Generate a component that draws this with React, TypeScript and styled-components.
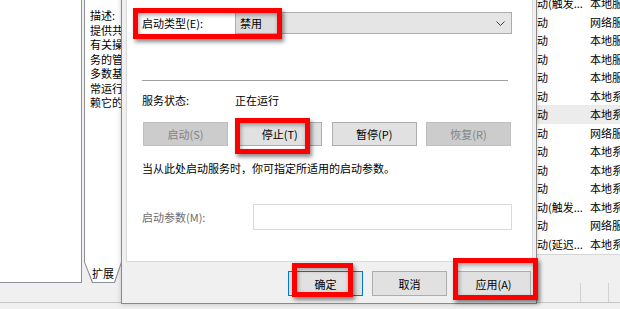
import styled, { createGlobalStyle } from 'styled-components';

const GlobalStyle = createGlobalStyle`
  html, body {
    margin: 0;
    padding: 0;
  }
  body {
    width: 620px;
    height: 309px;
    overflow: hidden;
    background: #f0f0f0;
    font-family: "Noto Sans CJK SC", "Microsoft YaHei", sans-serif;
    font-size: 11px;
    color: #000;
  }
  * {
    box-sizing: border-box;
  }
`;

const descLines = ['描述:', '提供共', '有关操', '务的管', '多数基', '常运行', '赖它的'];

const services = [
  ['手动(触发...', '本地服务'],
  ['自动', '网络服务'],
  ['自动', '本地服务'],
  ['自动', '本地服务'],
  ['自动', '本地服务'],
  ['自动', '本地系统'],
  ['自动', '本地系统'],
  ['自动', '网络服务'],
  ['自动', '本地系统'],
  ['自动', '本地系统'],
  ['自动', '本地系统'],
  ['手动(触发...', '本地系统'],
  ['自动', '网络服务'],
  ['自动(延迟...', '本地系统'],
  ['自动(延迟...', '本地服务'],
];

const App = () => {
  return (
    <Screen>
      <GlobalStyle />
      <MainArea>
        <TreePane />
        <RightPane>
          <Panes>
            <DescPane>
              {descLines.map((line) => (
                <div key={line}>{line}</div>
              ))}
            </DescPane>
            <ListPane>
              <ListBody>
                {services.map(([startup, account], i) => (
                  <ServiceRow key={i} $selected={i === 6}>
                    <span />
                    <Cell>{startup}</Cell>
                    <Cell>{account}</Cell>
                  </ServiceRow>
                ))}
              </ListBody>
            </ListPane>
          </Panes>
          <TabStrip>
            <Tab>扩展</Tab>
          </TabStrip>
        </RightPane>
      </MainArea>
      <StatusBar>
        <StatusCell />
        <StatusCell />
        <StatusCell />
      </StatusBar>

      <Dialog>
        <TabPage>
          <FieldRow>
            <span>启动类型(E):</span>
            <Combo>
              <ComboValue>禁用</ComboValue>
              <svg width='9' height='5' viewBox='0 0 9 5'>
                <polyline points='0.5,0.5 4.5,4.5 8.5,0.5' fill='none' stroke='#404040' strokeWidth='1' />
              </svg>
            </Combo>
          </FieldRow>
          <Separator />
          <StatusRow>
            <span>服务状态:</span>
            <span>正在运行</span>
          </StatusRow>
          <ButtonRow>
            <WinButton disabled>启动(S)</WinButton>
            <WinButton>停止(T)</WinButton>
            <WinButton>暂停(P)</WinButton>
            <WinButton disabled>恢复(R)</WinButton>
          </ButtonRow>
          <HelpText>当从此处启动服务时，你可指定所适用的启动参数。</HelpText>
          <ParamRow>
            <DisabledLabel>启动参数(M):</DisabledLabel>
            <ParamInput />
          </ParamRow>
        </TabPage>
        <Footer>
          <FooterButton $primary>确定</FooterButton>
          <FooterButton>取消</FooterButton>
          <FooterButton>应用(A)</FooterButton>
        </Footer>
      </Dialog>

      <Highlight $x={133} $y={8} $w={149} $h={31} />
      <Highlight $x={235} $y={118} $w={75} $h={36} />
      <Highlight $x={292} $y={263} $w={61} $h={34} />
      <Highlight $x={453} $y={258} $w={85} $h={42} />
    </Screen>
  );
};

export default App;

const Screen = styled.div`
  position: relative;
  width: 620px;
  height: 309px;
  overflow: hidden;
  display: flex;
  flex-direction: column;
  background: #f0f0f0;
`;

const MainArea = styled.div`
  display: flex;
  gap: 2px;
  height: 283px;
`;

const TreePane = styled.div`
  width: 82px;
  height: 283px;
  background: #fff;
  border-right: 1px solid #8d9199;
  border-bottom: 1px solid #8d9199;
`;

const RightPane = styled.div`
  flex: 1;
  display: flex;
  flex-direction: column;
`;

const Panes = styled.div`
  display: flex;
  height: 262px;
`;

const DescPane = styled.div`
  width: 150px;
  background: #fff;
  border-left: 1px solid #8d9199;
  padding: 8px 0 0 5px;
  line-height: 14.5px;
  white-space: nowrap;
  overflow: hidden;
`;

const ListPane = styled.div`
  flex: 1;
  height: 255px;
  background: #fff;
  overflow: hidden;
  border-bottom: 1px solid #d5d5d5;
`;

const ListBody = styled.div`
  margin-top: -6px;
`;

const ServiceRow = styled.div<{ $selected?: boolean }>`
  display: grid;
  grid-template-columns: 1fr 64px 30px;
  align-items: center;
  height: 18.5px;
  background: ${(p) => (p.$selected ? '#ececec' : 'transparent')};
`;

const Cell = styled.span`
  white-space: nowrap;
  overflow: hidden;
`;

const TabStrip = styled.div`
  display: flex;
  height: 21px;
`;

const Tab = styled.div`
  position: relative;
  width: 38px;
  height: 21px;
  display: flex;
  align-items: center;
  justify-content: center;
  background: #8d9199;
  clip-path: polygon(0 0, 100% 0, calc(100% - 7px) 100%, 8px 100%);
  z-index: 0;

  &::before {
    content: '';
    position: absolute;
    inset: 0 1px 1px 1px;
    background: #fff;
    clip-path: polygon(0 0, 100% 0, calc(100% - 7px) 100%, 8px 100%);
    z-index: -1;
  }
`;

const StatusBar = styled.div`
  display: grid;
  grid-template-columns: 580px 28px 1fr;
  height: 20px;
  border-bottom: 1px solid #c4c4c4;
`;

const StatusCell = styled.div`
  & + & {
    border-left: 1px solid #d2d2d2;
  }
`;

const Dialog = styled.div`
  position: absolute;
  left: 121px;
  top: -30px;
  width: 416px;
  height: 334px;
  display: flex;
  flex-direction: column;
  background: #f0f0f0;
  border: 1px solid #8a8a8a;
  box-shadow: 0 0 5px rgba(0, 0, 0, 0.2);
`;

const TabPage = styled.div`
  display: flex;
  flex-direction: column;
  height: 272px;
  margin: 19px 3px 0 4px;
  padding: 21px 20px 0 15px;
  background: #fff;
  border: 1px solid #d9d9d9;
`;

const FieldRow = styled.div`
  display: grid;
  grid-template-columns: 93px 1fr;
  align-items: center;
  height: 22px;
`;

const Combo = styled.div`
  display: flex;
  align-items: center;
  height: 22px;
  background: #e5e5e5;
  border: 1px solid #adadad;
  padding-right: 6px;

  svg {
    margin-left: auto;
  }
`;

const ComboValue = styled.div`
  display: flex;
  align-items: center;
  width: 42px;
  height: 100%;
  padding-left: 4px;
  background: #dcdcdc;
  border-right: 1px solid #c6c6c6;
`;

const Separator = styled.div`
  height: 1px;
  margin: 46px 4px 0 0;
  background: #a0a0a0;
`;

const StatusRow = styled.div`
  display: grid;
  grid-template-columns: 93px 1fr;
  margin-top: 12px;
  line-height: 14px;
`;

const ButtonRow = styled.div`
  display: flex;
  justify-content: space-between;
  margin-top: 15px;
  padding: 0 1px;
`;

const WinButton = styled.button`
  width: 85px;
  height: 24px;
  padding: 0;
  font: inherit;
  color: #000;
  background: #e1e1e1;
  border: 1px solid #adadad;

  &:disabled {
    color: #838383;
    background: #cccccc;
    border-color: #bfbfbf;
  }
`;

const HelpText = styled.div`
  margin-top: 15px;
  line-height: 14px;
`;

const ParamRow = styled.div`
  display: grid;
  grid-template-columns: 111px 1fr;
  align-items: center;
  margin-top: 29px;
`;

const DisabledLabel = styled.span`
  color: #6d6d6d;
`;

const ParamInput = styled.div`
  height: 26px;
  background: #fff;
  border: 1px solid #d9d9d9;
`;

const Footer = styled.div`
  flex: 1;
  display: flex;
  justify-content: flex-end;
  gap: 9px;
  padding: 9px 5px 0 0;
`;

const FooterButton = styled.button<{ $primary?: boolean }>`
  width: 75px;
  height: 25px;
  padding: 0;
  font: inherit;
  color: #000;
  background: #e1e1e1;
  border: 1px solid ${(p) => (p.$primary ? '#0078d7' : '#adadad')};
`;

const Highlight = styled.div<{ $x: number; $y: number; $w: number; $h: number }>`
  position: absolute;
  left: ${(p) => p.$x}px;
  top: ${(p) => p.$y}px;
  width: ${(p) => p.$w}px;
  height: ${(p) => p.$h}px;
  border: 5px solid #ff0000;
  box-shadow: 2px 3px 4px rgba(0, 0, 0, 0.45), inset 1px 2px 4px rgba(0, 0, 0, 0.35);
  pointer-events: none;
`;
